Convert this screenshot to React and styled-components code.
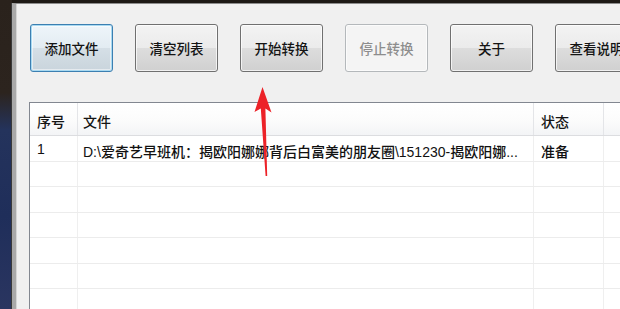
import React from 'react';
import styled, { createGlobalStyle } from 'styled-components';

const GlobalStyle = createGlobalStyle`
    html, body {
        margin: 0;
        padding: 0;
        width: 620px;
        height: 309px;
        overflow: hidden;
    }
    #root {
        width: 620px;
        height: 309px;
    }
`;

const buttons = [
    { label: '添加文件', focused: true },
    { label: '清空列表' },
    { label: '开始转换' },
    { label: '停止转换', disabled: true },
    { label: '关于' },
    { label: '查看说明' },
];

const columns = [
    { title: '序号', width: 48 },
    { title: '文件', width: 456 },
    { title: '状态', width: 70 },
    { title: '', width: 80 },
];

const rows = [
    ['1', 'D:\\爱奇艺早班机：揭欧阳娜娜背后白富美的朋友圈\\151230-揭欧阳娜...', '准备', ''],
    ['', '', '', ''],
    ['', '', '', ''],
    ['', '', '', ''],
    ['', '', '', ''],
    ['', '', '', ''],
    ['', '', '', ''],
];

const App = () => {
    return (
        <Screen>
            <GlobalStyle />
            <Desktop />
            <Window>
                <Toolbar>
                    {buttons.map((b) => (
                        <ToolButton key={b.label} $focused={b.focused} disabled={b.disabled}>
                            {b.label}
                        </ToolButton>
                    ))}
                </Toolbar>
                <ListView>
                    <HeaderRow>
                        {columns.map((c, i) => (
                            <HeaderCell key={i} $width={c.width}>{c.title}</HeaderCell>
                        ))}
                    </HeaderRow>
                    {rows.map((row, r) => (
                        <Row key={r}>
                            {row.map((cell, i) => (
                                <Cell key={i} $width={columns[i].width}>{cell}</Cell>
                            ))}
                        </Row>
                    ))}
                </ListView>
            </Window>
            <Arrow viewBox="0 0 30 95" width="30" height="95">
                <path d="M12.5 3 L4.5 28 L10.8 24.5 L15.6 92 L17.2 92 L15.4 24.5 L21.5 28.5 Z" fill="#ec2228" />
            </Arrow>
        </Screen>
    );
};

const Screen = styled.div`
    position: relative;
    display: flex;
    width: 620px;
    height: 309px;
    overflow: hidden;
    background: #1d1915;
    font-family: "Liberation Sans", "Noto Sans CJK SC", sans-serif;
    font-size: 14px;
    color: #111111;
`;

const Desktop = styled.div`
    width: 12px;
    flex-shrink: 0;
    background: linear-gradient(
        to bottom,
        #2a221c 0%,
        #2c241e 30%,
        #24335c 42%,
        #1f2e5a 70%,
        #2a3560 100%
    );
`;

const Window = styled.div`
    flex: 1;
    display: flex;
    flex-direction: column;
    margin-top: 3px;
    background: #f0f0f0;
    border-left: 4px solid #a9a9a9;
    border-top: 1px solid #8c8c8c;
    box-shadow: inset 1px 0 0 #d6d6d6, -1px 0 0 #3a3a3a;
`;

const Toolbar = styled.div`
    display: flex;
    gap: 22px;
    padding: 20px 0 0 14px;
    height: 48px;
`;

const ToolButton = styled.button`
    flex-shrink: 0;
    width: 83px;
    height: 48px;
    padding: 0;
    font-family: inherit;
    font-size: 13.5px;
    font-weight: 500;
    color: #141414;
    border: 1px solid #707070;
    border-radius: 3px;
    background: linear-gradient(
        to bottom,
        #f3f3f3 0%,
        #ebebeb 49%,
        #dddddd 51%,
        #d0d0d0 100%
    );
    box-shadow: inset 0 0 0 1px rgba(255, 255, 255, 0.7);

    ${(p) => p.$focused && `
        border-color: #3c7fb1;
        background: linear-gradient(to bottom, #eef5fa 0%, #e3ecf2 49%, #d5dfe6 51%, #c9d4dc 100%);
        box-shadow: inset 0 0 0 1px #a8d9f1, inset 0 0 0 2px rgba(255,255,255,0.5);
    `}

    &:disabled {
        color: #8d8d8d;
        border-color: #b4b8bb;
        background: #f4f4f4;
        box-shadow: inset 0 0 0 1px #fbfbfb;
    }
`;

const ListView = styled.div`
    flex: 1;
    margin: 30px 0 0 13px;
    background: #ffffff;
    border-left: 1px solid #828790;
    border-top: 1px solid #828790;
    overflow: hidden;
`;

const HeaderRow = styled.div`
    display: flex;
    height: 32px;
    background: linear-gradient(to bottom, #ffffff 0%, #fbfbfb 60%, #f3f4f6 100%);
    border-bottom: 1px solid #dcdde0;
`;

const HeaderCell = styled.div`
    width: ${(p) => p.$width}px;
    flex-shrink: 0;
    box-sizing: border-box;
    padding: 8px 0 0 7px;
    border-right: 1px solid #e4e5e8;
    color: #151515;
    font-weight: 500;
    white-space: nowrap;

    &:nth-child(2) {
        padding-left: 5px;
    }
`;

const Row = styled.div`
    display: flex;
    height: 25.5px;
    box-sizing: border-box;
    border-bottom: 1.5px solid #ececec;

    &:first-of-type {
        height: 27px;
    }
`;

const Cell = styled.div`
    width: ${(p) => p.$width}px;
    flex-shrink: 0;
    box-sizing: border-box;
    padding: 5px 0 0 7px;
    border-right: 1.5px solid #efefef;
    font-weight: 500;
    white-space: nowrap;
    overflow: hidden;

    &:nth-child(2) {
        padding-left: 5px;
    }
`;

const Arrow = styled.svg`
    position: absolute;
    left: 250px;
    top: 84px;
`;

export default App;
